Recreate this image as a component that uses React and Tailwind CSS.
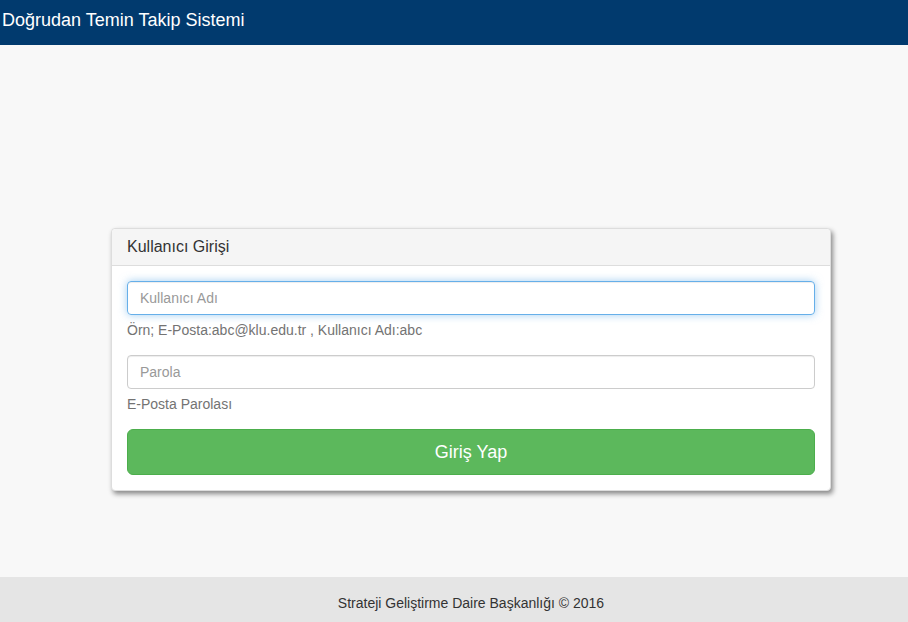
export default function App() {
  return (
    <div className="flex h-[622px] flex-col bg-[#f8f8f8] font-['Liberation_Sans',Arial,sans-serif] text-[14px] text-[#333]">
      <header className="flex h-[45px] shrink-0 items-center bg-[#013a6e] pl-[2px]">
        <span className="mt-[-5px] text-[18px] text-white">Doğrudan Temin Takip Sistemi</span>
      </header>

      <main className="flex-1 pt-[183px]">
        <div className="ml-[111px] w-[720px] rounded-[4px] border border-[#ddd] bg-white shadow-[2px_3px_5px_rgba(0,0,0,0.45)]">
          <div className="rounded-t-[4px] border-b border-[#ddd] bg-[#f5f5f5] px-[15px] py-[9px] text-[16px] leading-[18px]">
            Kullanıcı Girişi
          </div>
          <div className="p-[15px]">
            <div className="mb-[15px]">
              <input
                type="text"
                placeholder="Kullanıcı Adı"
                className="block h-[34px] w-full rounded-[4px] border border-[#66afe9] px-[12px] text-[14px] text-[#555] placeholder:text-[#999] shadow-[inset_0_1px_1px_rgba(0,0,0,0.075),0_0_8px_rgba(102,175,233,0.6)] outline-none"
              />
              <p className="mt-[5px] mb-[10px] leading-[20px] text-[#737373]">Örn; E-Posta:abc@klu.edu.tr , Kullanıcı Adı:abc</p>
            </div>
            <div className="mb-[15px]">
              <input
                type="password"
                placeholder="Parola"
                className="block h-[34px] w-full rounded-[4px] border border-[#ccc] px-[12px] text-[14px] text-[#555] placeholder:text-[#999] shadow-[inset_0_1px_1px_rgba(0,0,0,0.075)] outline-none"
              />
              <p className="mt-[5px] mb-[10px] leading-[20px] text-[#737373]">E-Posta Parolası</p>
            </div>
            <button className="block h-[46px] w-full rounded-[6px] border border-[#4cae4c] bg-[#5cb85c] text-[18px] text-white">
              Giriş Yap
            </button>
          </div>
        </div>
      </main>

      <footer className="flex h-[45px] shrink-0 items-center justify-center bg-[#e5e5e5] pt-[8px] pl-[34px] text-[14px] text-[#333]">
        Strateji Geliştirme Daire Başkanlığı © 2016
      </footer>
    </div>
  );
}
